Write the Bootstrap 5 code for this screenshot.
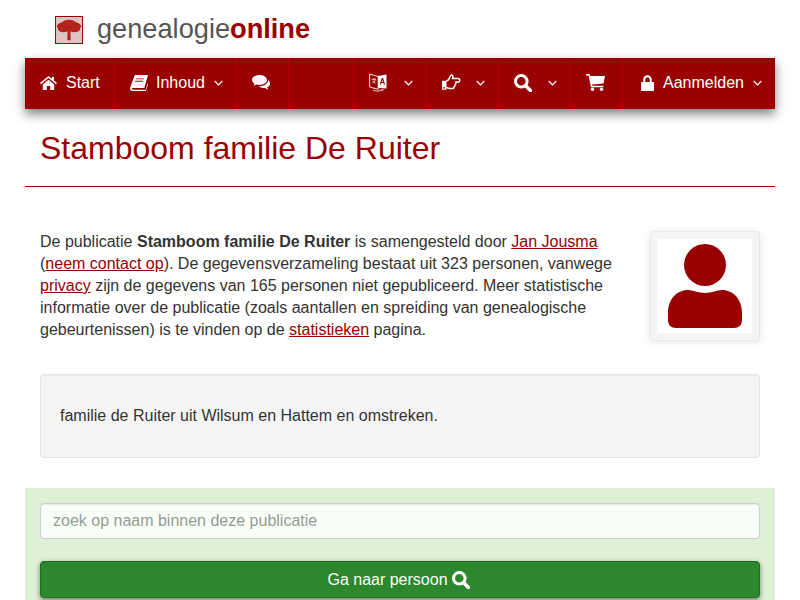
<!DOCTYPE html>
<html lang="nl">
<head>
<meta charset="utf-8">
<title>Stamboom familie De Ruiter</title>
<link rel="stylesheet" href="https://cdn.jsdelivr.net/npm/bootstrap@5.3.0/dist/css/bootstrap.min.css">
<style>
html,body{height:600px;overflow:hidden}
body{font-family:"Liberation Sans",Arial,sans-serif;font-size:16px;line-height:22px;color:#333;background:#fff}
.page-wrap{width:750px;margin-left:25px}
.brand-row{height:58px;padding:16px 0 0 30px;gap:14px}
.logo-box{width:28px;height:28px;border:1px solid #900;background:#dcc4c2;display:block}
.logo-tree{filter:blur(.7px)}
.brand-text{font-size:27.2px;line-height:26px;color:#555}
.brand-text b{color:#900}
.main-nav{height:51px;background:#900;box-shadow:0 5px 10px rgba(0,0,0,.5);color:#fff}
.nav-cell{height:51px;border-left:1px solid #b30000;gap:9px;padding:0 13px 2px 15px;flex:none}
.nav-cell:first-child{border-left:0}
.nav-cell svg{display:block;flex:none}
.w-start{width:89px}.w-inhoud{width:122px;gap:8px}.w-chat{width:52px}.w-gap{width:65px}.w-lang{width:73px}.w-hand{width:72px}.w-search{width:72px}.w-cart{width:52px}.w-login{width:153px;padding-left:18px}
.chev{margin-left:auto}
.page-title{font-size:32px;line-height:36px;color:#900;margin:0;padding:21px 15px 20px;border-bottom:1px solid #900;font-weight:400}
.intro{padding:44px 15px 0;gap:38px}
.intro p{margin:0;width:572px;flex:none}
.intro a{color:#900}
.photo-box{width:110px;height:110px;background:#f5f5f5;border:1px solid #e8e8e8;border-radius:4px;box-shadow:0 1px 8px rgba(0,0,0,.1);padding:7px}
.photo-inner{background:#fff;width:94px;height:94px;display:block}
.note-box{margin:33px 15px 0;height:84px;background:#f5f5f5;border:1px solid #e3e3e3;border-radius:4px;padding:30px 19px;box-shadow:inset 0 1px 1px rgba(0,0,0,.05)}
.find-panel{margin-top:30px;height:112px;background:#dff0d8;padding:15px}
.find-input{height:36px;background:#f7fff7;border:1px solid #ccc;border-radius:4px;font-size:16px;line-height:22px;color:#555;padding:6px 12px;box-shadow:inset 0 1px 1px rgba(0,0,0,.075)}
.find-input::placeholder{color:#999}
.find-btn{display:flex;align-items:center;justify-content:center;gap:4px;width:100%;height:37px;margin-top:22px;background:#2d882d;border:1px solid #1f6f1f;border-radius:4px;color:#fff;font-size:16px;line-height:22px;padding:0 3px 0 0;box-shadow:0 2px 5px rgba(0,0,0,.5)}
</style>
</head>
<body>
<div class="page-wrap">
  <div class="brand-row d-flex align-items-start">
    <svg class="logo-box" viewBox="0 0 28 28" aria-hidden="true">
      <g class="logo-tree" fill="#b3231b"><ellipse cx="14" cy="10" rx="13" ry="5.500"/><ellipse cx="14" cy="7.500" rx="8" ry="4.500"/><ellipse cx="8" cy="13" rx="6" ry="3.500"/><ellipse cx="20" cy="13" rx="6" ry="3.500"/><path d="M12.500 13h3l.3 12h-3.600z"/></g>
    </svg>
    <div class="brand-text">genealogie<b>online</b></div>
  </div>

  <nav class="main-nav d-flex">
    <div class="nav-cell w-start d-flex align-items-center">
      <svg width="17" height="14" viewBox="0 0 17 14" fill="#fff"><path d="M8.500 0 0 7l1 1.200L8.500 2 16 8.200 17 7l-3-2.500V1h-2v1.800zM2.800 8.500V14h4v-4h3.400v4h4V8.500L8.500 3.800z"/></svg>
      <span>Start</span>
    </div>
    <div class="nav-cell w-inhoud d-flex align-items-center">
      <svg width="18" height="16" viewBox="0 0 17 18" preserveAspectRatio="none"><path fill="#fff" d="M4.500 0H17l-3.500 14.500H2.800c-.9 0-1.200.7-1 1.200.2.500.7.800 1.300.8h11.800l1.600-7 .5 1-2 7.500H2.500C1 18 0 16.600 0 15.200 0 14.800 0 14.400.2 14z"/><path fill="#900" d="M5.800 3.800h7.500l-.3 1.100H5.500zM5 6.500h7.500l-.3 1.100H4.700z"/></svg>
      <span>Inhoud</span>
      <svg class="chev" width="9" height="6" viewBox="0 0 9 6" fill="none" stroke="#fff" stroke-width="1.200"><path d="M.7 1 4.500 4.800 8.300 1"/></svg>
    </div>
    <div class="nav-cell w-chat d-flex align-items-center">
      <svg width="19" height="15" viewBox="0 0 19 15" fill="#fff"><path d="M7.500 0C3.400 0 0 2.300 0 5c0 1.500 1 2.900 2.500 3.800L1.500 11l2.800-1.600c1 .3 2.100.5 3.200.5 4.100 0 7.500-2.200 7.500-4.900S11.600 0 7.500 0z"/><path d="M16 4.800c.1.200.1.300.1.500 0 3.300-3.800 6-8.600 6h-.6c1 1 2.800 1.700 4.600 1.700.5 0 1 0 1.500-.1l3 2-.8-2.600c1.700-.8 2.800-2.100 2.800-3.600 0-1.600-.8-3-2-3.900z"/></svg>
    </div>
    <div class="nav-cell w-gap d-flex"></div>
    <div class="nav-cell w-lang d-flex align-items-center">
      <svg width="18" height="20" viewBox="0 0 18 20"><path fill="#fff" d="M9 3 17.500 1.500v14L9 15z"/><path fill="#900" d="M12.700 5h1.400l2 6.500h-1.300l-.4-1.400h-2l-.4 1.400h-1.300zm.7 1.700-.7 2.400h1.400z"/><path fill="#900" stroke="#fff" stroke-width=".9" d="M.6 1 9.200 3.500v12.800L.6 14z"/><path fill="none" stroke="#fff" stroke-width=".8" d="M2.800 6.500 6.800 6M4.800 5v1.500M3.500 10c1.500-.8 2.500-2 2.800-3.800M3.700 7.500c.5 1.300 1.500 2.200 2.800 2.800M4 17c2.500 1.500 6 1.500 9-.3M14 16v1.400h-1.400"/></svg>
      <svg class="chev" width="9" height="6" viewBox="0 0 9 6" fill="none" stroke="#fff" stroke-width="1.200"><path d="M.7 1 4.500 4.800 8.300 1"/></svg>
    </div>
    <div class="nav-cell w-hand d-flex align-items-center">
      <svg width="19" height="17" viewBox="0 0 19 17"><path fill="none" stroke="#fff" stroke-width="1.500" d="M4.300 7.200c1-.4 2.500-1.700 3-2.800.5-1.200 1-3.400 2.300-3.400 1.200 0 1.600 1.500 1 3.400h5.300c1 0 1.900.8 1.900 1.800s-.9 1.800-2 1.800h-1.800c.3 1.200-.1 2-.8 2.500.1 1-.2 1.800-1 2.200 0 1-.6 1.800-2 1.800H8.500c-1.600 0-2.800-.8-4.200-1"/><rect fill="#fff" y="6.800" width="4.500" height="9" rx=".5"/><circle fill="#900" cx="2" cy="13.800" r=".9"/></svg>
      <svg class="chev" width="9" height="6" viewBox="0 0 9 6" fill="none" stroke="#fff" stroke-width="1.200"><path d="M.7 1 4.500 4.800 8.300 1"/></svg>
    </div>
    <div class="nav-cell w-search d-flex align-items-center">
      <svg width="18" height="18" viewBox="0 0 18 18" fill="none" stroke="#fff"><circle cx="7.300" cy="7.300" r="5.800" stroke-width="3"/><path d="m11.800 11.800 4.600 4.600" stroke-width="3.600" stroke-linecap="round"/></svg>
      <svg class="chev" width="9" height="6" viewBox="0 0 9 6" fill="none" stroke="#fff" stroke-width="1.200"><path d="M.7 1 4.500 4.800 8.300 1"/></svg>
    </div>
    <div class="nav-cell w-cart d-flex align-items-center">
      <svg width="19" height="17" viewBox="0 0 19 17" fill="#fff"><path d="M0 0h3.600l.5 2H19l-1.500 7.500-11.500 1 .3 1.300h11v1.500H5L2.500 1.500H0z"/><circle cx="6.500" cy="15.300" r="1.700"/><circle cx="15.500" cy="15.300" r="1.700"/></svg>
    </div>
    <div class="nav-cell w-login d-flex align-items-center">
      <svg width="13" height="16" viewBox="0 0 13 16" fill="#fff"><path d="M1 7h1.300V4.500a4.200 4.200 0 0 1 8.400 0V7H12c.6 0 1 .4 1 1v7c0 .6-.4 1-1 1H1c-.6 0-1-.4-1-1V8c0-.6.4-1 1-1zm3.300 0h4.400V4.500a2.200 2.200 0 0 0-4.400 0z"/></svg>
      <span>Aanmelden</span>
      <svg class="chev" width="9" height="6" viewBox="0 0 9 6" fill="none" stroke="#fff" stroke-width="1.200"><path d="M.7 1 4.500 4.800 8.300 1"/></svg>
    </div>
  </nav>

  <h1 class="page-title">Stamboom familie De Ruiter</h1>

  <div class="intro d-flex align-items-start">
    <p>De publicatie <b>Stamboom familie De Ruiter</b> is samengesteld door <a href="#">Jan Jousma</a> (<a href="#">neem contact op</a>). De gegevensverzameling bestaat uit 323 personen, vanwege <a href="#">privacy</a> zijn de gegevens van 165 personen niet gepubliceerd. Meer statistische informatie over de publicatie (zoals aantallen en spreiding van genealogische gebeurtenissen) is te vinden op de <a href="#">statistieken</a> pagina.</p>
    <div class="photo-box">
      <svg class="photo-inner" viewBox="0 0 94 94" fill="#900"><circle cx="47" cy="26" r="21"/><path d="M30 51c5 0 10 3 17 3s12-3 17-3c11 0 20 9 20 23v7c0 5-3 8-8 8H18c-5 0-8-3-8-8v-7c0-14 9-23 20-23z"/></svg>
    </div>
  </div>

  <div class="note-box">familie de Ruiter uit Wilsum en Hattem en omstreken.</div>

  <div class="find-panel">
    <input class="find-input form-control" type="text" placeholder="zoek op naam binnen deze publicatie">
    <button class="find-btn" type="button">Ga naar persoon
      <svg width="18" height="18" viewBox="0 0 18 18" fill="none" stroke="#fff"><circle cx="7.300" cy="7.300" r="5.800" stroke-width="3"/><path d="m11.800 11.800 4.600 4.600" stroke-width="3.600" stroke-linecap="round"/></svg>
    </button>
  </div>
</div>
</body>
</html>
